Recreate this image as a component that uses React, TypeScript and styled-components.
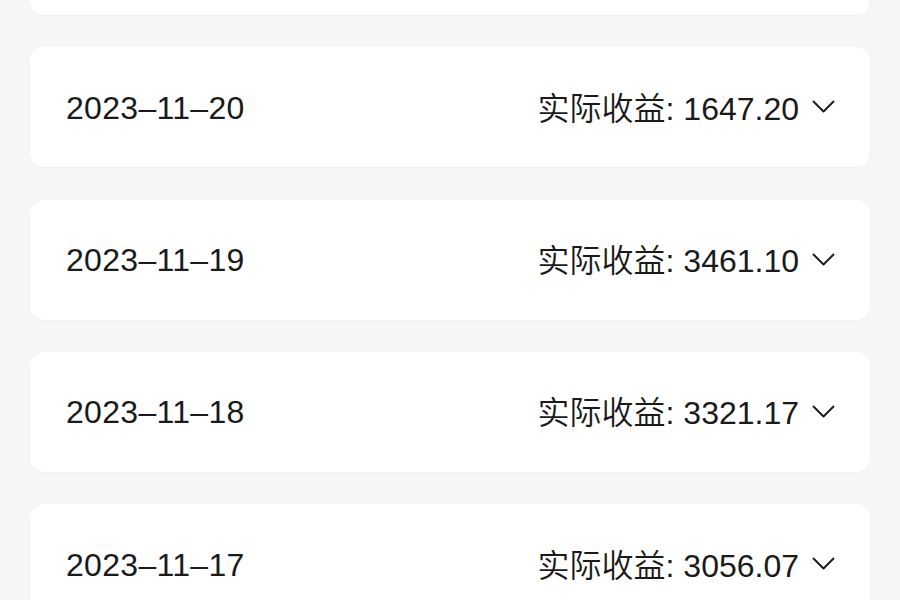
import React from "react";
import styled, { createGlobalStyle } from "styled-components";

const GlobalStyle = createGlobalStyle`
  html, body {
    margin: 0;
    padding: 0;
    background: #f6f6f6;
    overflow: hidden;
  }
  body {
    font-family: "Liberation Sans", "Noto Sans CJK SC", sans-serif;
    color: #1a1a1a;
  }
`;

const Page = styled.div`
  width: 900px;
  height: 600px;
  overflow: hidden;
  background: #f6f6f6;
`;

const List = styled.div`
  display: flex;
  flex-direction: column;
  gap: 32.3px;
  padding: 0 30px;
  margin-top: -105px;
`;

const Card = styled.div`
  height: 120px;
  flex-shrink: 0;
  background: #ffffff;
  border-radius: 14px;
  box-shadow: 0 1px 2px rgba(0, 0, 0, 0.03);
  display: flex;
  align-items: center;
  justify-content: space-between;
  padding: 0 35px 0 36px;
`;

const DateText = styled.span`
  font-size: 32px;
  line-height: 1;
  letter-spacing: 0.3px;
  margin-top: 1px;
`;

const Income = styled.div`
  display: flex;
  align-items: center;
  gap: 13px;
  font-size: 32px;
  line-height: 1;
`;

const Label = styled.span`
  font-family: "Noto Sans CJK SC", sans-serif;
  font-weight: 350;
`;

const Chevron = styled.svg`
  width: 23px;
  height: 14px;
  display: block;
`;

const rows = [
  { date: "2023–11–20", amount: "1647.20" },
  { date: "2023–11–19", amount: "3461.10" },
  { date: "2023–11–18", amount: "3321.17" },
  { date: "2023–11–17", amount: "3056.07" },
];

export default function App() {
  return (
    <Page>
      <GlobalStyle />
      <List>
        <Card />
        {rows.map((r) => (
          <Card key={r.date}>
            <DateText>{r.date}</DateText>
            <Income>
              <span>
                <Label>实际收益</Label>: {r.amount}
              </span>
              <Chevron viewBox="0 0 23 14" fill="none">
                <path
                  d="M1.5 1.5 L11.5 11.5 L21.5 1.5"
                  stroke="#1a1a1a"
                  strokeWidth="1.9"
                  strokeLinecap="round"
                  strokeLinejoin="round"
                />
              </Chevron>
            </Income>
          </Card>
        ))}
      </List>
    </Page>
  );
}
